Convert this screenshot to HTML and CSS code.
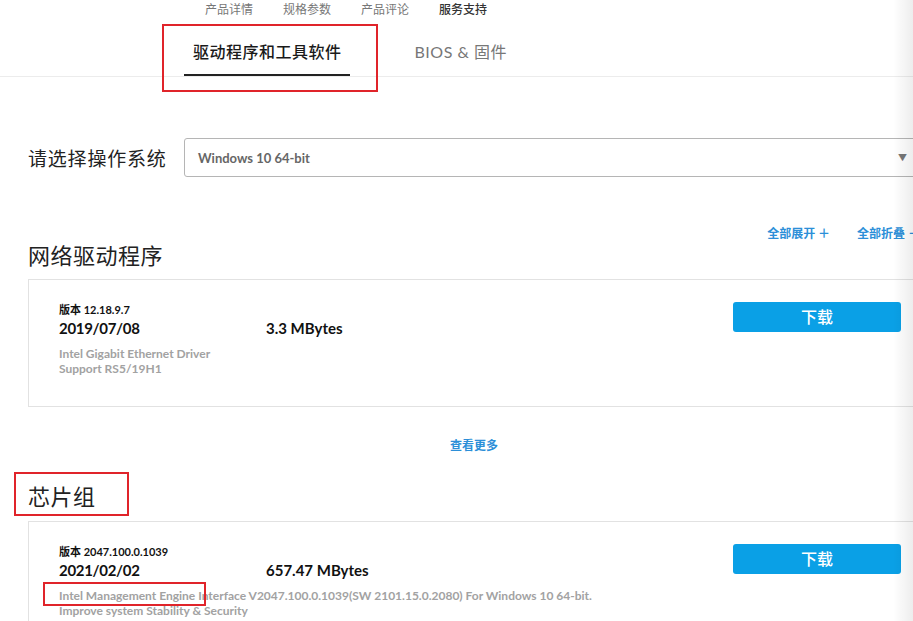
FILE: index.html
```html
<!DOCTYPE html>
<html>
<head>
    <meta charset="utf-8">
    <title>驱动程序和工具软件</title>
    <link rel="stylesheet" href="styles.css">
</head>
<body>

<div class="page">

    <div class="subnav">
        <a href="#">产品详情</a>
        <a href="#">规格参数</a>
        <a href="#">产品评论</a>
        <a href="#" class="current">服务支持</a>
    </div>

    <div class="tabs">
        <a href="#" class="tab active">驱动程序和工具软件</a>
        <a href="#" class="tab">BIOS &amp; 固件</a>
    </div>

    <div class="content">

        <div class="os-row">
            <span class="os-label">请选择操作系统</span>
            <div class="select">
                <span>Windows 10 64-bit</span>
                <span class="arrow">&#9660;</span>
            </div>
        </div>

        <div class="section-head">
            <h2>网络驱动程序</h2>
            <div class="actions">
                <a href="#">全部展开 ＋</a>
                <a href="#">全部折叠 －</a>
            </div>
        </div>

        <div class="card">
            <div class="info">
                <div class="version">版本 12.18.9.7</div>
                <div class="meta">
                    <span class="date">2019/07/08</span>
                    <span class="size">3.3 MBytes</span>
                </div>
                <div class="desc">
                    Intel Gigabit Ethernet Driver<br>
                    Support RS5/19H1
                </div>
            </div>
            <a href="#" class="download">下载</a>
        </div>

        <div class="more"><a href="#">查看更多</a></div>

        <div class="section-head">
            <h2>芯片组</h2>
        </div>

        <div class="card">
            <div class="info">
                <div class="version">版本 2047.100.0.1039</div>
                <div class="meta">
                    <span class="date">2021/02/02</span>
                    <span class="size">657.47 MBytes</span>
                </div>
                <div class="desc">
                    Intel Management Engine Interface V2047.100.0.1039(SW 2101.15.0.2080) For Windows 10 64-bit.<br>
                    Improve system Stability &amp; Security
                </div>
            </div>
            <a href="#" class="download">下载</a>
        </div>

    </div>

    <!-- annotation marks -->
    <div class="mark mark-tab"></div>
    <div class="mark mark-chipset"></div>
    <div class="mark mark-engine"></div>

    <div class="edge"></div>
</div>

</body>
</html>
```

FILE: styles.css
```css
BODY {
    margin: 0;
    overflow: hidden;
    background: #fff;
    font-family: Lato, "Noto Sans CJK SC", sans-serif;
    color: #222;
}

A {
    text-decoration: none;
    color: inherit;
}

.page {
    position: relative;
    width: 930px;
    min-height: 621px;
}

/* top navigation */

.subnav {
    display: flex;
    gap: 30px;
    padding-left: 205px;
    height: 20px;
    line-height: 20px;
    font-size: 12px;
    color: #777;
}

.subnav .current {
    color: #333;
    font-weight: 500;
}

.tabs {
    display: flex;
    gap: 56px;
    padding-left: 184px;
    height: 56px;
    border-bottom: 1px solid #ececec;
}

.tab {
    padding: 22px 8px 12px 9px;
    line-height: 20px;
    font-size: 16px;
    letter-spacing: 0.5px;
    color: #777;
}

.tab.active {
    color: #1a1a1a;
    font-weight: 500;
    border-bottom: 2px solid #222;
}

/* content */

.content {
    padding-left: 28px;
}

.os-row {
    display: flex;
    align-items: center;
    gap: 19px;
    margin-top: 61px;
}

.os-label {
    width: 137px;
    font-size: 19px;
    letter-spacing: 0.8px;
    white-space: nowrap;
}

.select {
    flex: 1;
    display: flex;
    justify-content: space-between;
    align-items: center;
    height: 37px;
    padding: 0 22px 0 13px;
    border: 1px solid #b5b5b5;
    border-radius: 3px;
    font-size: 13px;
    font-weight: bold;
    color: #666;
}

.select .arrow {
    font-size: 9px;
    color: #777;
}

.section-head {
    display: flex;
    justify-content: space-between;
    margin-top: 50px;
}

.section-head H2 {
    margin: 0;
    align-self: flex-end;
    line-height: 30px;
    font-size: 22px;
    font-weight: normal;
    letter-spacing: 0.5px;
}

.actions {
    display: flex;
    gap: 27px;
    margin-right: 10px;
    margin-bottom: 30px;
    line-height: 14px;
    font-size: 12px;
    font-weight: bold;
    color: #2c8fd8;
}

.card {
    display: flex;
    align-items: flex-start;
    margin-top: 8px;
    padding: 23px 28px 30px 30px;
    border: 1px solid #e2e2e2;
}

.card .info {
    flex: 1;
}

.card .version {
    line-height: 14px;
    font-size: 11px;
    font-weight: bold;
    color: #111;
}

.card .meta {
    display: flex;
    line-height: 22px;
    font-size: 15px;
    font-weight: bold;
    color: #111;
}

.card .date {
    width: 207px;
    letter-spacing: -0.3px;
}

.card .desc {
    margin-top: 7px;
    line-height: 15px;
    font-size: 12px;
    font-weight: bold;
    color: #a2a2a2;
}

.download {
    margin-top: -1px;
    width: 168px;
    height: 30px;
    line-height: 30px;
    border-radius: 3px;
    background-color: #0aa0e6;
    color: #fff;
    text-align: center;
    font-size: 16px;
    font-weight: 500;
}

.more {
    margin-top: 31px;
    padding-right: 10px;
    line-height: 16px;
    text-align: center;
    font-size: 12px;
    font-weight: bold;
    color: #2c8fd8;
}

.more + .section-head {
    margin-top: 28px;
}

.more + .section-head H2 {
    margin-bottom: 1px;
}

/* red annotation boxes */

.mark {
    position: absolute;
    border: 2px solid #e0242a;
}

.mark-tab {
    left: 162px;
    top: 24px;
    width: 212px;
    height: 64px;
}

.mark-chipset {
    left: 14px;
    top: 472px;
    width: 111px;
    height: 40px;
}

.mark-engine {
    left: 43px;
    top: 582px;
    width: 159px;
    height: 20px;
}

.edge {
    position: absolute;
    top: 0;
    left: 893px;
    width: 20px;
    height: 100%;
    background: linear-gradient(to right, rgba(0, 0, 0, 0), rgba(0, 0, 0, 0.07));
}
```
